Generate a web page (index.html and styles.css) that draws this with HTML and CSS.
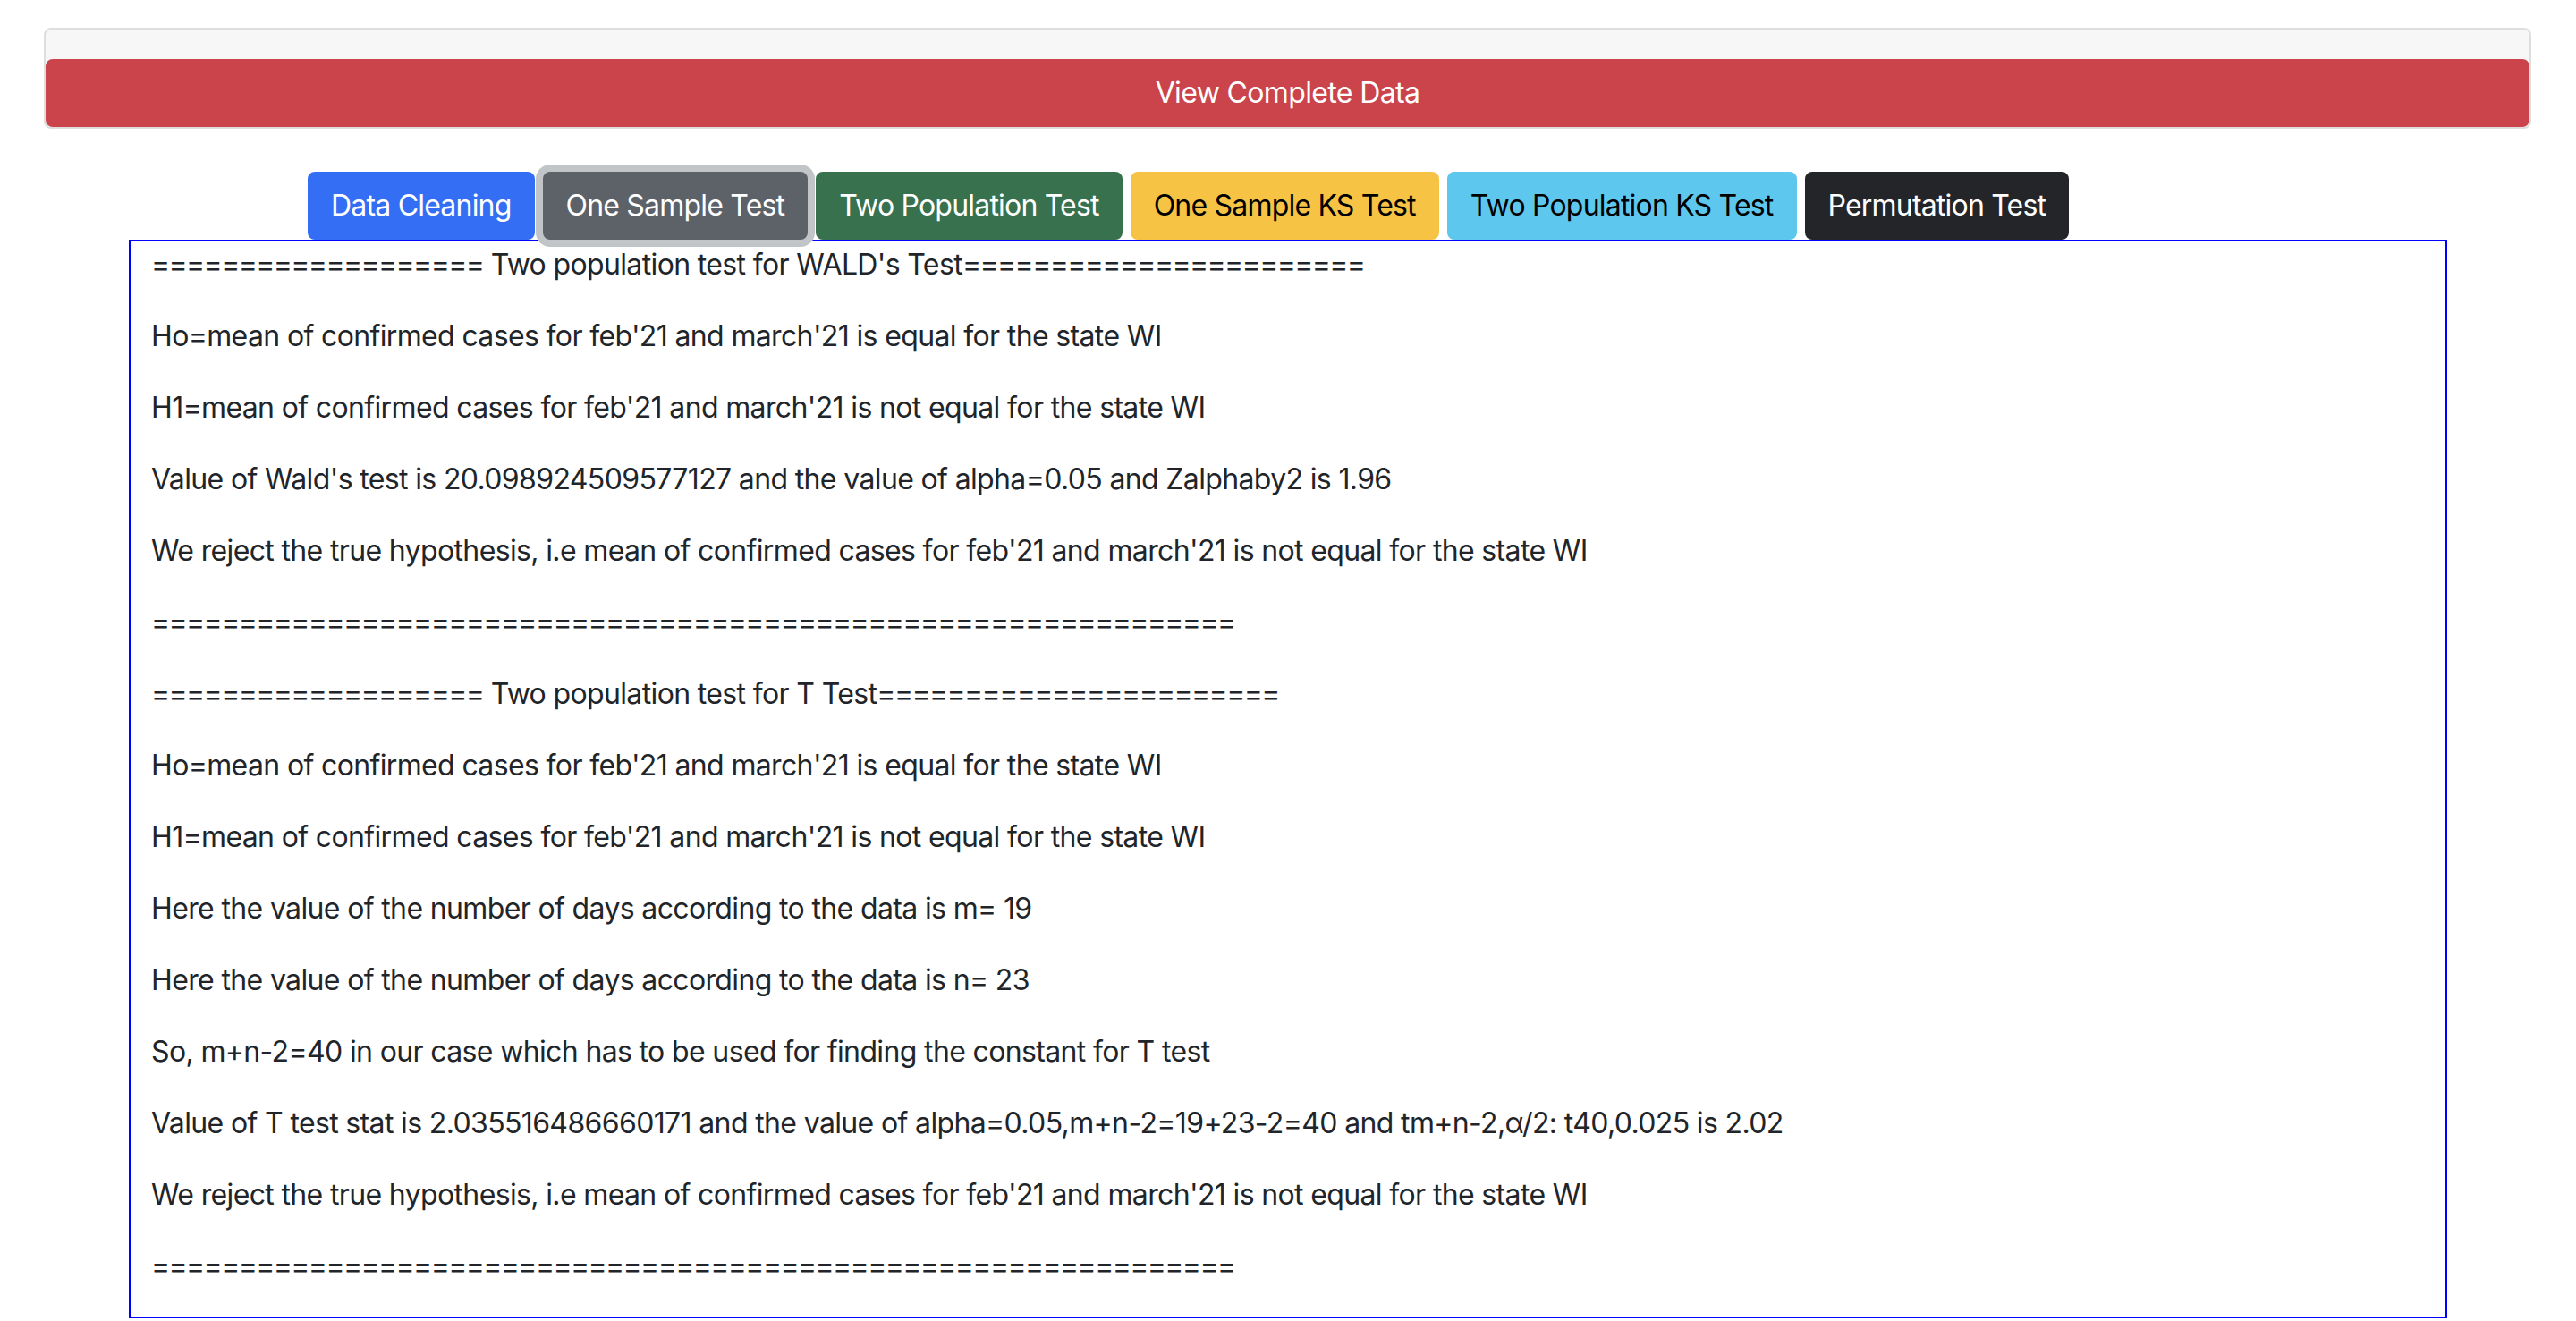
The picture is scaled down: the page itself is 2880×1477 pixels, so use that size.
FILE: index.html
```html
<!DOCTYPE html>
<html lang="en">
<head>
<meta charset="utf-8">
<title>Hypothesis Tests</title>
<link rel="stylesheet" href="styles.css">
</head>
<body>
<div class="topbar">
  <button class="btn btn-danger btn-block">View Complete Data</button>
</div>
<div class="tabs">
  <button class="btn btn-primary">Data Cleaning</button>
  <button class="btn btn-secondary is-focused">One Sample Test</button>
  <button class="btn btn-success">Two Population Test</button>
  <button class="btn btn-warning">One Sample KS Test</button>
  <button class="btn btn-info">Two Population KS Test</button>
  <button class="btn btn-dark">Permutation Test</button>
</div>
<div class="output">
  <p><span class="eq">===================</span> Two population test for WALD's Test<span class="eq">=======================</span></p>
  <p>Ho=mean of confirmed cases for feb'21 and march'21 is equal for the state WI</p>
  <p>H1=mean of confirmed cases for feb'21 and march'21 is not equal for the state WI</p>
  <p>Value of Wald's test is 20.098924509577127 and the value of alpha=0.05 and Zalphaby2 is 1.96</p>
  <p>We reject the true hypothesis, i.e mean of confirmed cases for feb'21 and march'21 is not equal for the state WI</p>
  <p><span class="eq">==============================================================</span></p>
  <p><span class="eq">===================</span> Two population test for T Test<span class="eq">=======================</span></p>
  <p>Ho=mean of confirmed cases for feb'21 and march'21 is equal for the state WI</p>
  <p>H1=mean of confirmed cases for feb'21 and march'21 is not equal for the state WI</p>
  <p>Here the value of the number of days according to the data is m= 19</p>
  <p>Here the value of the number of days according to the data is n= 23</p>
  <p>So, m+n-2=40 in our case which has to be used for finding the constant for T test</p>
  <p>Value of T test stat is 2.035516486660171 and the value of alpha=0.05,m+n-2=19+23-2=40 and tm+n-2,α/2: t40,0.025 is 2.02</p>
  <p>We reject the true hypothesis, i.e mean of confirmed cases for feb'21 and march'21 is not equal for the state WI</p>
  <p><span class="eq">==============================================================</span></p>
</div>
</body>
</html>
```
FILE: styles.css
```css
* { box-sizing: border-box; }
html, body { margin: 0; padding: 0; background: #fff; }
body {
  font-family: Inter, "Noto Sans", "Liberation Sans", sans-serif;
  font-size: 32px;
  line-height: 1.5;
  letter-spacing: -0.02em;
  color: #212529;
}
.topbar {
  margin: 31px 50px 0 49px;
  border: 2px solid #dedede;
  border-radius: 8px;
  background: #f7f7f7;
  padding-top: 33px;
}
.btn {
  font-family: inherit;
  font-size: 32px;
  letter-spacing: -0.025em;
  line-height: 48px;
  height: 76px;
  padding: 12px 24px;
  border: 2px solid transparent;
  border-radius: 8px;
  color: #fff;
  cursor: pointer;
  white-space: nowrap;
}
.btn-block { display: block; width: 100%; letter-spacing: -0.02em; }
.btn-danger { background: #cb444b; border-color: #cb444b; }
.btn-primary { background: #346ef5; border-color: #346ef5; }
.btn-secondary { background: #5d6168; border-color: #5d6168; }
.btn-success { background: #38714d; border-color: #38714d; }
.btn-warning { background: #f6c345; border-color: #f6c345; color: #000; }
.btn-info { background: #5dc7ed; border-color: #5dc7ed; color: #000; }
.btn-dark { background: #232529; border-color: #232529; }
.is-focused {
  position: relative;
  z-index: 1;
  box-shadow: 0 0 0 8px #c1c5c8;
}
.tabs {
  display: flex;
  gap: 9px;
  margin-top: 48px;
  padding-left: 344px;
}
.output {
  width: 90%;
  margin: 0 auto;
  border: 2px solid #0000ff;
  padding: 2px 23px 0;
}
.output p {
  margin: 0 0 32px;
}
.eq {
  letter-spacing: -0.051em;
}
```
